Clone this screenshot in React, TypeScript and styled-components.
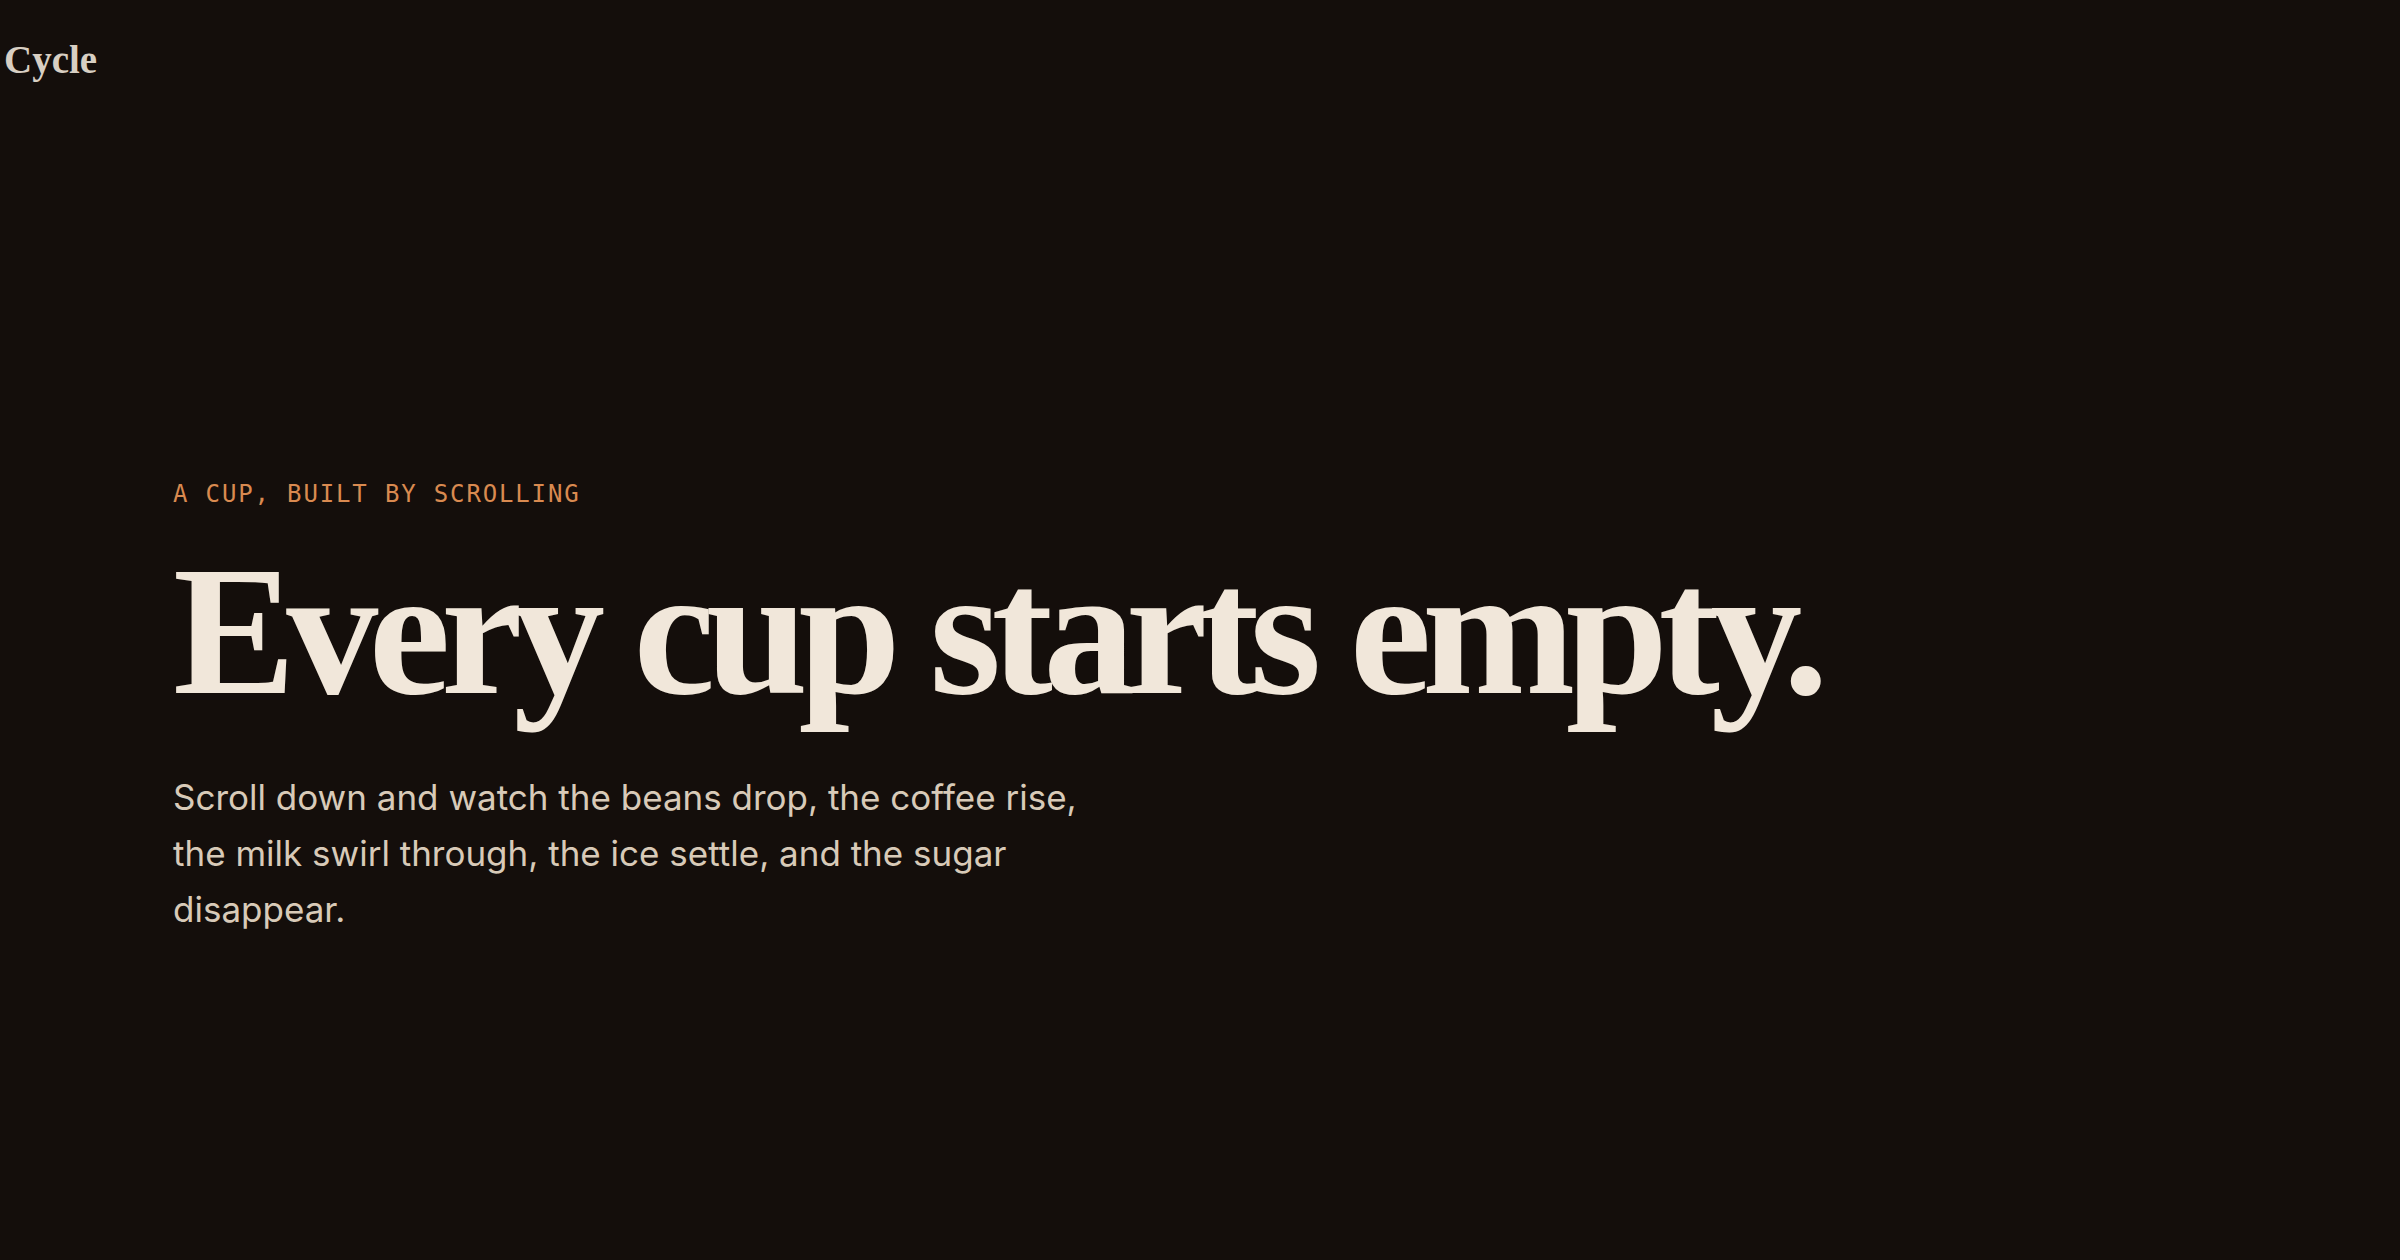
import React from 'react';
import styled, { createGlobalStyle } from 'styled-components';

const GlobalStyle = createGlobalStyle`
  html, body {
    margin: 0;
    padding: 0;
    background: #140e0b;
  }

  body {
    font-family: Inter, "Noto Sans", sans-serif;
    -webkit-font-smoothing: antialiased;
  }
`;

const Page = styled.div`
  min-height: 100vh;
  background: #140e0b;
  color: #f1e7da;
`;

const Header = styled.header`
  display: flex;
  align-items: center;
  padding: 40px 0 0 4px;
`;

const Logo = styled.a`
  font-family: "Liberation Serif", "Times New Roman", serif;
  font-weight: 700;
  font-size: 39px;
  line-height: 1;
  color: #d8cfc3;
  text-decoration: none;
`;

const Hero = styled.section`
  display: flex;
  flex-direction: column;
  align-items: flex-start;
  padding: 403px 0 0 173px;
`;

const Eyebrow = styled.p`
  margin: 0;
  font-family: "DejaVu Sans Mono", "Liberation Mono", monospace;
  font-size: 24px;
  line-height: 24px;
  letter-spacing: 1.85px;
  text-transform: uppercase;
  color: #d98a50;
`;

const Title = styled.h1`
  margin: 33px 0 0;
  font-family: "Liberation Serif", "Times New Roman", serif;
  font-weight: 700;
  font-size: 184px;
  line-height: 1;
  letter-spacing: -9.5px;
  word-spacing: 1.5px;
  color: #f1e7da;
  white-space: nowrap;
`;

const Lede = styled.p`
  margin: 46px 0 0;
  max-width: 930px;
  font-family: Inter, "Noto Sans", sans-serif;
  font-size: 35px;
  line-height: 56px;
  color: #d8cab8;
`;

export default function App() {
  return (
    <Page>
      <GlobalStyle />
      <Header>
        <Logo href="#">Cycle</Logo>
      </Header>
      <Hero>
        <Eyebrow>A cup, built by scrolling</Eyebrow>
        <Title>Every cup starts empty.</Title>
        <Lede>
          Scroll down and watch the beans drop, the coffee rise, the milk swirl
          through, the ice settle, and the sugar disappear.
        </Lede>
      </Hero>
    </Page>
  );
}
